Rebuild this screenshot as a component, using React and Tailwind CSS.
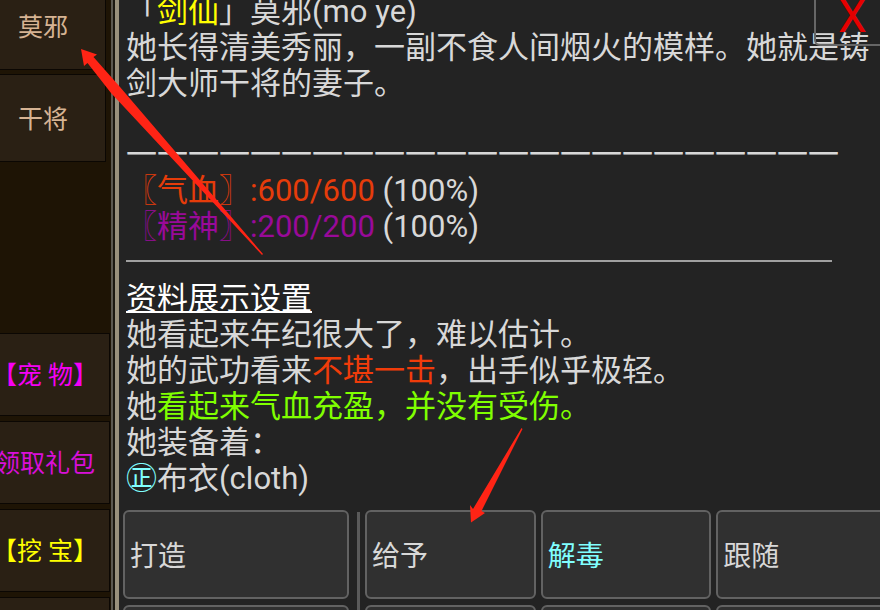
import React from 'react';

const npcs = ['莫邪', '干将'];

const shortcuts = [
  { label: '【宠 物】', color: 'text-[#f500f5]' },
  { label: '领取礼包', color: 'text-[#d90fd9]' },
  { label: '【挖 宝】', color: 'text-[#ffff00]' },
  { label: '', color: 'text-[#ffff00]' },
];

const stats = [
  { name: '气血', value: '600/600', percent: '(100%)', color: 'text-[#e63c0a]' },
  { name: '精神', value: '200/200', percent: '(100%)', color: 'text-[#990a99]' },
];

const actions = [
  { label: '给予', color: 'text-[#d8d8d8]' },
  { label: '解毒', color: 'text-[#80ffff]' },
  { label: '跟随', color: 'text-[#d8d8d8]' },
  { label: '', color: '' },
  { label: '', color: '' },
  { label: '', color: '' },
];

function SideButton({ className, children }) {
  return (
    <button
      type="button"
      className={`shrink-0 border border-[#0b0703] bg-[#2a2014] pt-[3px] text-center text-[25px] whitespace-pre ${className}`}
    >
      {children}
    </button>
  );
}

function ActionButton({ className = '', children }) {
  return (
    <button
      type="button"
      className={`h-[89px] rounded-md border-2 border-[#626262] bg-[#303030] pt-1 pl-[5px] text-left text-[28px] ${className}`}
    >
      {children}
    </button>
  );
}

function Sidebar() {
  return (
    <nav className="-ml-5 flex w-[131px] shrink-0 flex-col bg-[#1e1405]">
      <div className="-mt-[18px] flex flex-col gap-1 pr-[5px]">
        {npcs.map((name) => (
          <SideButton key={name} className="h-[88px] text-[#d6b393]">{name}</SideButton>
        ))}
      </div>
      <div className="mt-[171px] flex flex-col gap-[5px] pr-px">
        {shortcuts.map((item, i) => (
          <SideButton key={i} className={`h-[83px] ${item.color}`}>{item.label}</SideButton>
        ))}
      </div>
    </nav>
  );
}

function Profile() {
  return (
    <section className="-mt-1.5 pl-[7px] text-[31px] leading-9 text-[#d8d8d8]">
      <p>「<span className="text-[#ffff00]">剑仙</span>」莫邪(mo ye)</p>
      <p>她长得清美秀丽，一副不食人间烟火的模样。她就是铸剑大师干将的妻子。</p>
      <p className="mt-[35px] overflow-hidden whitespace-nowrap">{'一'.repeat(23)}</p>
      <div>
        {stats.map((s) => (
          <p key={s.name}>
            <span className={s.color}>〖{s.name}〗:{s.value}</span> {s.percent}
          </p>
        ))}
      </div>
      <hr className="mt-[15px] mr-12 mb-[19px] border-t-2 border-[#a0a0a0]" />
      <a href="#settings" className="block w-fit text-white underline decoration-2 underline-offset-2">资料展示设置</a>
      <p>她看起来年纪很大了，难以估计。</p>
      <p>她的武功看来<span className="text-[#f03c0a]">不堪一击</span>，出手似乎极轻。</p>
      <p>她<span className="text-[#80ff00]">看起来气血充盈，并没有受伤。</span></p>
      <p>她装备着：</p>
      <p><span className="text-[#80ffff]">㊣</span>布衣(cloth)</p>
    </section>
  );
}

function Actions() {
  return (
    <div className="mt-[13px] -mr-[7px] flex pl-1">
      <div className="flex w-[226px] shrink-0 flex-col gap-1.5">
        <ActionButton className="text-[#d8d8d8]">打造</ActionButton>
        <ActionButton />
      </div>
      <div className="mr-[5px] ml-2 mt-0.5 w-[3px] shrink-0 bg-[#5a5a5a]" />
      <div className="grid flex-1 grid-cols-3 gap-x-[5px] gap-y-1.5">
        {actions.map((a, i) => (
          <ActionButton key={i} className={a.color}>{a.label}</ActionButton>
        ))}
      </div>
    </div>
  );
}

export default function App() {
  return (
    <div className="relative flex h-screen overflow-hidden bg-[#232323] font-[Roboto,'Noto_Sans_CJK_SC',sans-serif]">
      <Sidebar />

      {/* Frame between the side list and the panel */}
      <div className="flex w-2 shrink-0 bg-[#1b1710]">
        <div className="w-0.5 bg-[#5c5850]" />
        <div className="ml-0.5 flex-1 bg-[#99907c]" />
      </div>

      <main className="min-w-0 flex-1">
        <Profile />
        <Actions />
      </main>

      <button
        type="button"
        aria-label="关闭"
        className="absolute -top-2 -right-[9px] h-[54px] w-[75px] rounded-bl-md border-b-2 border-l-2 border-[#666666] pb-1 text-center text-[46px] leading-[46px] text-[#e60000]"
      >
        X
      </button>

      {/* Pointer arrows */}
      <svg className="pointer-events-none absolute top-0 left-0" width="880" height="610" viewBox="0 0 880 610" fill="#ff2415">
        <path d="M81 49L97 54.5L93.500 57L120 87L263 254L262 255L111 93L87.500 63L84 66Z" />
        <path d="M471 522.500L485 513L481.500 511L522.500 429L521.500 428L473 509L470 505Z" />
      </svg>
    </div>
  );
}
